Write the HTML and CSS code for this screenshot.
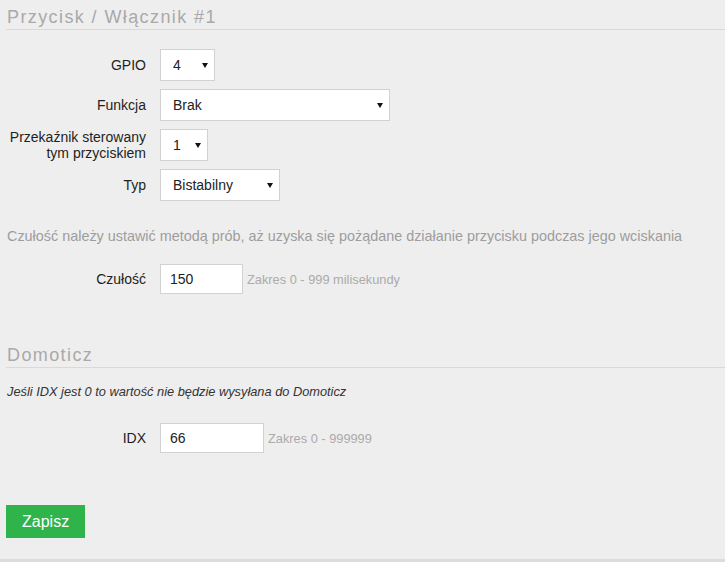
FILE: index.html
```html
<!DOCTYPE html>
<html lang="pl">
<head>
<meta charset="utf-8">
<title>Przycisk / Włącznik #1</title>
<link rel="stylesheet" href="styles.css">
</head>
<body>
<form class="page">
  <section class="section">
    <h2 class="legend">Przycisk / Włącznik #1</h2>
    <div class="rows">
      <div class="row">
        <label class="label">GPIO</label>
        <span class="select-wrap w-gpio"><select class="select"><option>4</option></select></span>
      </div>
      <div class="row">
        <label class="label">Funkcja</label>
        <span class="select-wrap w-func"><select class="select"><option>Brak</option></select></span>
      </div>
      <div class="row">
        <label class="label">Przekaźnik sterowany tym przyciskiem</label>
        <span class="select-wrap w-relay"><select class="select"><option>1</option></select></span>
      </div>
      <div class="row">
        <label class="label">Typ</label>
        <span class="select-wrap w-type"><select class="select"><option>Bistabilny</option></select></span>
      </div>
    </div>
    <p class="hint">Czułość należy ustawić metodą prób, aż uzyska się pożądane działanie przycisku podczas jego wciskania</p>
    <div class="row row-input">
      <label class="label">Czułość</label>
      <input class="input w-sens" type="text" value="150">
      <span class="msg">Zakres 0 - 999 milisekundy</span>
    </div>
  </section>

  <section class="section section-domoticz">
    <h2 class="legend">Domoticz</h2>
    <p class="note">Jeśli IDX jest 0 to wartość nie będzie wysyłana do Domoticz</p>
    <div class="row row-input row-idx">
      <label class="label">IDX</label>
      <input class="input w-idx" type="text" value="66">
      <span class="msg">Zakres 0 - 999999</span>
    </div>
  </section>

  <div class="actions">
    <button class="btn" type="button">Zapisz</button>
  </div>
</form>
</body>
</html>
```

FILE: styles.css
```css
html, body {
  margin: 0;
  padding: 0;
  background: #eeeeee;
}

body {
  font-family: "Liberation Sans", Arial, sans-serif;
  color: #222;
  width: 725px;
  height: 562px;
  overflow: hidden;
}

.page {
  padding: 0 0 21px 6px;
  border-bottom: 3px solid #dcdcdc;
}

.legend {
  margin: 0;
  padding: 6px 0 1px 1px;
  font-family: "Liberation Sans", Arial, sans-serif;
  font-size: 18px;
  line-height: 22px;
  font-weight: normal;
  letter-spacing: 1.4px;
  color: #a9a9a9;
  border-bottom: 1px solid #d9d9d9;
}

.rows {
  margin-top: 19px;
  margin-bottom: 0;
}

.row {
  display: flex;
  align-items: center;
  margin-bottom: 8px;
}

.rows .row:nth-child(4) {
  margin-top: 1px;
}

.label {
  width: 140px;
  margin-right: 14px;
  flex: none;
  text-align: right;
  font-size: 14px;
  line-height: 16px;
  color: #1e1e1e;
}

.select-wrap {
  position: relative;
  display: block;
  height: 32px;
}

.select-wrap::after {
  content: "";
  position: absolute;
  right: 7px;
  top: 14px;
  width: 0;
  height: 0;
  border-left: 3px solid transparent;
  border-right: 3px solid transparent;
  border-top: 5px solid #111;
  pointer-events: none;
}

.select {
  -webkit-appearance: none;
  appearance: none;
  box-sizing: border-box;
  width: 100%;
  height: 32px;
  margin: 0;
  padding: 0 0 0 12px;
  border: 1px solid #d2d2d2;
  border-radius: 0;
  background: #fff;
  font-family: "Liberation Sans", Arial, sans-serif;
  font-size: 14px;
  color: #222;
  outline: none;
}

.w-gpio { width: 55px; }
.w-func { width: 230px; }
.w-relay { width: 48px; }
.w-type { width: 120px; }

.hint {
  margin: 0 0 0 1px;
  padding-top: 19px;
  font-size: 14.4px;
  line-height: 16px;
  color: #9d9d9d;
}

.row-input {
  margin-top: 20px;
  margin-bottom: 0;
}

.input {
  box-sizing: border-box;
  height: 30px;
  margin: 0;
  padding: 0 9px;
  border: 1px solid #d2d2d2;
  border-radius: 0;
  background: #fff;
  font-family: "Liberation Sans", Arial, sans-serif;
  font-size: 14px;
  color: #222;
  outline: none;
}

.w-sens { width: 83px; }
.w-idx { width: 104px; }

.msg {
  padding-left: 4px;
  font-size: 12.8px;
  color: #ababab;
}

.section-domoticz {
  margin-top: 44px;
}

.note {
  margin: 16px 0 0 1px;
  font-size: 12.8px;
  line-height: 15px;
  font-style: italic;
  color: #333;
}

.row-idx {
  margin-top: 24px;
}

.actions {
  margin-top: 52px;
}

.btn {
  display: block;
  margin: 0;
  padding: 0 16px;
  height: 33px;
  border: 0;
  border-radius: 0;
  background: #2fb34b;
  color: #fff;
  font-family: "Liberation Sans", Arial, sans-serif;
  font-size: 16px;
  line-height: 33px;
}
```
